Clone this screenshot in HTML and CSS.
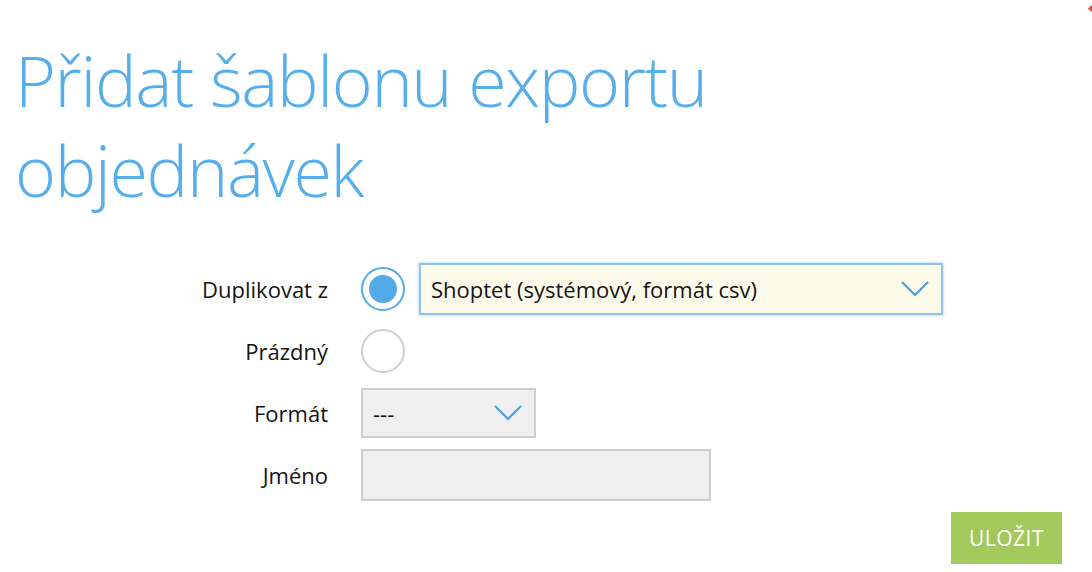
FILE: index.html
```html
<!DOCTYPE html>
<html lang="cs">
<head>
<meta charset="utf-8">
<title>Přidat šablonu exportu objednávek</title>
<link rel="stylesheet" href="styles.css">
</head>
<body>
<div class="page">
  <span class="close-mark"></span>
  <h1 class="title">Přidat šablonu exportu objednávek</h1>
  <form class="form">
    <label class="label">Duplikovat z</label>
    <span class="radio radio-on"><span class="dot"></span></span>
    <div class="select select-active">
      <span class="select-text">Shoptet (systémový, formát csv)</span>
      <svg class="chev" width="28" height="16" viewBox="0 0 28 16"><path d="M1 1 L14 14 L27 1" fill="none" stroke="#4a9fdc" stroke-width="2.2"/></svg>
    </div>

    <label class="label">Prázdný</label>
    <span class="radio"></span>
    <span class="empty"></span>

    <label class="label">Formát</label>
    <div class="select select-small">
      <span class="select-text">---</span>
      <svg class="chev" width="28" height="16" viewBox="0 0 28 16"><path d="M1 1 L14 14 L27 1" fill="none" stroke="#4a9fdc" stroke-width="2.2"/></svg>
    </div>

    <label class="label">Jméno</label>
    <div class="input"></div>
  </form>
  <div class="actions">
    <button type="button" class="btn">ULOŽIT</button>
  </div>
</div>
</body>
</html>
```

FILE: styles.css
```css
html, body {
  margin: 0;
  padding: 0;
  background: #ffffff;
}
body {
  font-family: "Open Sans", "Liberation Sans", sans-serif;
  color: #1a1a1a;
}
.page {
  position: relative;
  width: 1092px;
  height: 572px;
  overflow: hidden;
}
.close-mark {
  position: absolute;
  top: 6px;
  right: -2px;
  width: 5px;
  height: 5px;
  background: #d9534f;
  transform: rotate(45deg);
}
.title {
  margin: 0;
  padding: 35px 0 0 15px;
  font-weight: 300;
  font-size: 70px;
  line-height: 90px;
  letter-spacing: -1.35px;
  color: #56aeea;
  width: 760px;
}
.form {
  display: grid;
  grid-template-columns: 328px 44px 524px;
  grid-auto-rows: 52px;
  column-gap: 0;
  row-gap: 10px;
  margin-top: 48px;
  align-items: center;
}
.label {
  grid-column: 1;
  text-align: right;
  font-size: 22px;
  color: #141414;
}
.radio {
  grid-column: 2;
  margin-left: 33px;
  width: 44px;
  height: 44px;
  box-sizing: border-box;
  border: 2px solid #cfcfcf;
  border-radius: 50%;
  display: flex;
  align-items: center;
  justify-content: center;
  background: #fff;
}
.radio-on {
  border-color: #52aae8;
}
.dot {
  width: 28px;
  height: 28px;
  border-radius: 50%;
  background: #52aae8;
}
.select {
  box-sizing: border-box;
  display: flex;
  align-items: center;
  justify-content: space-between;
}
.select-active {
  grid-column: 3;
  margin-left: 47px;
  height: 52px;
  width: 524px;
  border: 2px solid #8fc3ee;
  box-shadow: 0 0 3px rgba(100, 170, 230, 0.6);
  background: #fdfbe9;
  padding: 0 12px 0 10px;
}
.select-text {
  font-size: 22px;
  color: #141414;
}
.select-small {
  grid-column: 2 / 4;
  margin-left: 33px;
  width: 175px;
  height: 50px;
  border: 2px solid #cecece;
  background: #efefef;
  padding: 0 12px 0 10px;
}
.input {
  grid-column: 2 / 4;
  margin-left: 33px;
  box-sizing: border-box;
  width: 350px;
  height: 52px;
  border: 2px solid #cecece;
  background: #efefef;
}
.empty {
  grid-column: 3;
}
.actions {
  display: flex;
  justify-content: flex-end;
  padding-right: 30px;
  margin-top: 11px;
}
.btn {
  width: 111px;
  height: 52px;
  border: 0;
  background: #a3c85b;
  color: #ffffff;
  font-family: "Open Sans", "Liberation Sans", sans-serif;
  font-size: 21px;
  letter-spacing: 0.5px;
  cursor: pointer;
}
```
